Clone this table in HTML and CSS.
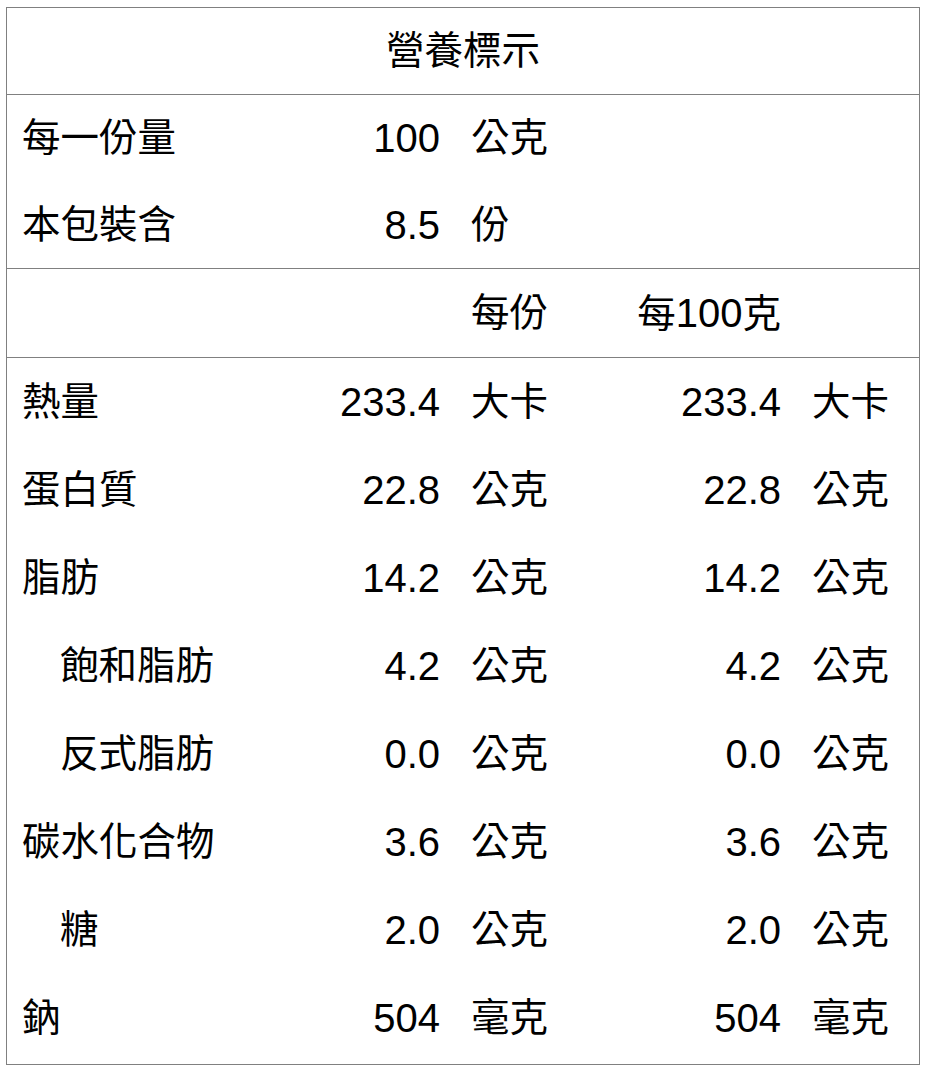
FILE: index.html
```html
<!DOCTYPE html>
<html lang="zh-Hant">
<head>
<meta charset="utf-8">
<title>營養標示</title>
<link rel="stylesheet" href="styles.css">
</head>
<body>
<div class="label">
  <div class="title">營養標示</div>
  <div class="section section-serving">
    <div class="row"><span class="name">每一份量</span><span class="val">100</span><span class="unit">公克</span><span class="val2"></span><span class="unit2"></span></div>
    <div class="row"><span class="name">本包裝含</span><span class="val">8.5</span><span class="unit">份</span><span class="val2"></span><span class="unit2"></span></div>
  </div>
  <div class="section section-head">
    <div class="row"><span class="name"></span><span class="val"></span><span class="unit">每份</span><span class="val2 head"><span class="cjk">每</span>100<span class="cjk">克</span></span><span class="unit2"></span></div>
  </div>
  <div class="section section-data">
    <div class="row"><span class="name">熱量</span><span class="val">233.4</span><span class="unit">大卡</span><span class="val2">233.4</span><span class="unit2">大卡</span></div>
    <div class="row"><span class="name">蛋白質</span><span class="val">22.8</span><span class="unit">公克</span><span class="val2">22.8</span><span class="unit2">公克</span></div>
    <div class="row"><span class="name">脂肪</span><span class="val">14.2</span><span class="unit">公克</span><span class="val2">14.2</span><span class="unit2">公克</span></div>
    <div class="row"><span class="name sub">飽和脂肪</span><span class="val">4.2</span><span class="unit">公克</span><span class="val2">4.2</span><span class="unit2">公克</span></div>
    <div class="row"><span class="name sub">反式脂肪</span><span class="val">0.0</span><span class="unit">公克</span><span class="val2">0.0</span><span class="unit2">公克</span></div>
    <div class="row"><span class="name">碳水化合物</span><span class="val">3.6</span><span class="unit">公克</span><span class="val2">3.6</span><span class="unit2">公克</span></div>
    <div class="row"><span class="name sub">糖</span><span class="val">2.0</span><span class="unit">公克</span><span class="val2">2.0</span><span class="unit2">公克</span></div>
    <div class="row"><span class="name">鈉</span><span class="val">504</span><span class="unit">毫克</span><span class="val2">504</span><span class="unit2">毫克</span></div>
  </div>
</div>
</body>
</html>
```

FILE: styles.css
```css
html, body {
  margin: 0;
  padding: 0;
  background: #ffffff;
}

body {
  font-family: "Liberation Sans", "Noto Sans CJK TC", sans-serif;
  font-size: 40px;
  color: #000000;
}

.label {
  margin: 7px 8px 0 6px;
  width: 914px;
  box-sizing: border-box;
  border: 1px solid #808080;
}

.title {
  height: 86px;
  line-height: 86px;
  text-align: center;
  font-size: 38.5px;
  border-bottom: 1px solid #808080;
}

.section {
  border-bottom: 1px solid #808080;
}

.section:last-child {
  border-bottom: none;
}

.row {
  display: grid;
  grid-template-columns: 298px 120px 221px 120px 1fr;
  padding-left: 15px;
  height: 88px;
  line-height: 88px;
  white-space: nowrap;
}

.section-serving .row {
  height: 86.5px;
  line-height: 86.5px;
}

.section-data {
  padding-bottom: 2px;
}

.name, .unit, .unit2, .cjk {
  font-size: 38.5px;
}

.name.sub {
  padding-left: 38px;
}

.val, .val2 {
  text-align: right;
}

.val2.head {
  display: flex;
  justify-content: flex-end;
  align-items: baseline;
}

.unit, .unit2 {
  padding-left: 31px;
}
```
